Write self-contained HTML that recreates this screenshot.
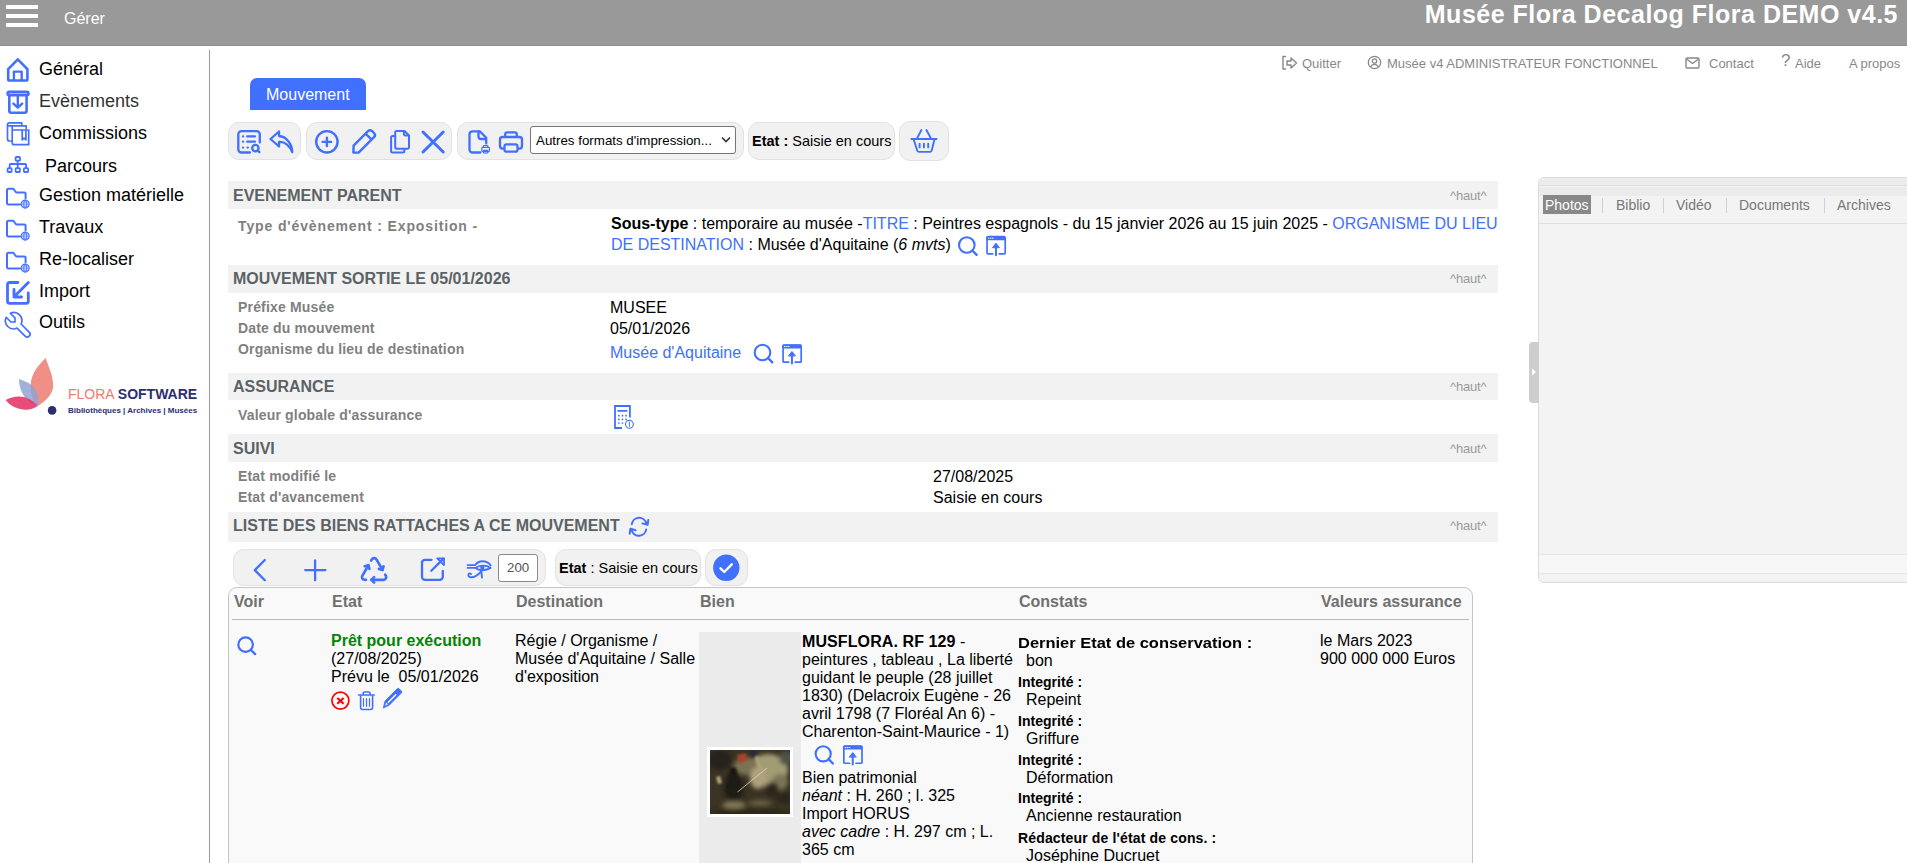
<!DOCTYPE html>
<html><head><meta charset="utf-8">
<style>
*{box-sizing:border-box}
html,body{margin:0;padding:0}
body{width:1907px;height:863px;overflow:hidden;position:relative;background:#fff;font-family:"Liberation Sans",sans-serif;color:#000}
.abs{position:absolute}
.nw{white-space:nowrap}
#hdr{left:0;top:0;width:1907px;height:46px;background:#999;border-bottom:1px solid #8e8e8e}
.hb{position:absolute;left:6px;width:32px;height:4px;background:#fff}
#side{left:209px;top:50px;width:1px;height:813px;background:#999}
.mi{position:absolute;left:39px;font-size:18px;line-height:20px;white-space:nowrap;color:#000}
.ic{position:absolute}
.lk{position:absolute;top:56px;font-size:13px;line-height:16px;color:#888;white-space:nowrap}
.tb{position:absolute;top:122px;height:38px;background:#f1f1f1;border:1px solid #e2e2e2;border-radius:11px}
.sh{position:absolute;left:228px;width:1270px;background:#f2f2f2}
.sh .t{position:absolute;left:5px;font-size:16px;font-weight:bold;color:#5b6266;white-space:nowrap}
.sh .h{position:absolute;right:12px;font-size:12px;color:#9a9a9a;white-space:nowrap}
.lb{position:absolute;left:238px;font-size:13px;font-weight:bold;letter-spacing:0.7px;color:#808080;white-space:nowrap}
.vl{position:absolute;font-size:16px;white-space:nowrap;color:#000}
.blue{color:#4a6cf7}
</style></head><body>
<div id="hdr" class="abs">
  <div class="hb" style="top:5px"></div>
  <div class="hb" style="top:14px"></div>
  <div class="hb" style="top:23px"></div>
  <div class="abs nw" style="left:64px;top:10px;font-size:16px;color:#fff">Gérer</div>
  <div class="abs nw" style="right:9px;top:0px;font-size:25px;font-weight:bold;color:#fff;letter-spacing:0.5px">Musée Flora Decalog Flora DEMO v4.5</div>
</div>
<div id="side" class="abs"></div>

<!-- sidebar icons -->
<svg class="abs" style="left:0;top:0;pointer-events:none" width="210" height="340" viewBox="0 0 210 340" fill="none" stroke="#4470ff" stroke-linecap="round" stroke-linejoin="round">
 <path d="M5.8 69.5 L17.8 58.3 L29.8 69.5" stroke-width="0" />
 <path d="M8.2 79.2 V69.2 L17.8 59.3 L27.4 69.2 V79.2 a1.3 1.3 0 0 1 -1.3 1.3 H9.5 a1.3 1.3 0 0 1 -1.3 -1.3 Z" stroke-width="2.6"/>
 <path d="M13.9 80.3 V71.6 H21.7 V80.3" stroke-width="2.4"/>
 <rect x="7.6" y="91.9" width="20.9" height="3.2" rx="1.6" stroke-width="2.6"/>
 <path d="M9.3 95.5 V110.8 a2 2 0 0 0 2 2 H24.6 a2 2 0 0 0 2 -2 V95.5" stroke-width="2.6"/>
 <path d="M17.8 96 V107.2 M13.4 103.6 L17.8 107.6 L22.2 103.6" stroke-width="2.4"/>
 <g stroke-width="1.7">
  <path d="M11.4 141 H9.5 a2 2 0 0 1 -2 -2 V124.8 a2 2 0 0 1 2 -2 H21.8 V124.5"/>
  <path d="M7.8 125.8 H26.2 V128.5"/>
  <path d="M12.2 126.5 V142.7 a2 2 0 0 0 2 2 H28.7 V130 H12.2"/>
  <path d="M22.2 130.4 V139.9 L24 138.2 L25.9 139.9 V130.4"/>
 </g>
 <g stroke-width="1.8">
  <rect x="15.6" y="157" width="4.4" height="3.7" rx="0.8"/>
  <rect x="7.6" y="168.1" width="4" height="3.9" rx="0.8"/><rect x="15.6" y="168.1" width="4.3" height="3.9" rx="0.8"/><rect x="23.9" y="168.1" width="4.3" height="3.9" rx="0.8"/>
  <path d="M17.7 161.2 V167.5 M9.7 167.5 V164.8 a0.8 0.8 0 0 1 0.8 -0.8 H25.3 a0.8 0.8 0 0 1 0.8 0.8 V167.5"/>
 </g>
<g transform="translate(0 0)"><path d="M20 204.4 H8.5 a1.5 1.5 0 0 1 -1.5 -1.5 V190.3 a1.5 1.5 0 0 1 1.5 -1.5 H13.4 L16.2 192.5 H24.1 a1.5 1.5 0 0 1 1.5 1.5 V198.2" stroke-width="2"/><circle cx="25.2" cy="204.1" r="4" stroke-width="1.1"/><path d="M21.2 204.1 H29.2 M25.2 200.1 C23.2 202 23.2 206.2 25.2 208.1 C27.2 206.2 27.2 202 25.2 200.1 M21.9 202 H28.5 M21.9 206.2 H28.5" stroke-width="0.9"/></g><g transform="translate(0 32)"><path d="M20 204.4 H8.5 a1.5 1.5 0 0 1 -1.5 -1.5 V190.3 a1.5 1.5 0 0 1 1.5 -1.5 H13.4 L16.2 192.5 H24.1 a1.5 1.5 0 0 1 1.5 1.5 V198.2" stroke-width="2"/><circle cx="25.2" cy="204.1" r="4" stroke-width="1.1"/><path d="M21.2 204.1 H29.2 M25.2 200.1 C23.2 202 23.2 206.2 25.2 208.1 C27.2 206.2 27.2 202 25.2 200.1 M21.9 202 H28.5 M21.9 206.2 H28.5" stroke-width="0.9"/></g><g transform="translate(0 64)"><path d="M20 204.4 H8.5 a1.5 1.5 0 0 1 -1.5 -1.5 V190.3 a1.5 1.5 0 0 1 1.5 -1.5 H13.4 L16.2 192.5 H24.1 a1.5 1.5 0 0 1 1.5 1.5 V198.2" stroke-width="2"/><circle cx="25.2" cy="204.1" r="4" stroke-width="1.1"/><path d="M21.2 204.1 H29.2 M25.2 200.1 C23.2 202 23.2 206.2 25.2 208.1 C27.2 206.2 27.2 202 25.2 200.1 M21.9 202 H28.5 M21.9 206.2 H28.5" stroke-width="0.9"/></g>
 <g stroke-width="2.8">
  <path d="M17.9 282.5 H9.5 a2 2 0 0 0 -2 2 V301.3 a2 2 0 0 0 2 2 H26.3 a2 2 0 0 0 2 -2 V292.9"/>
  <path d="M28.3 282.6 L14.2 296.7 M14 289.3 V297 H21.6"/>
 </g>
 <g transform="translate(1.5 308.5) scale(1.35)" stroke-width="1.25"><path d="M7 10h3v-3l-3.5 -3.5a6 6 0 0 1 8 8l6 6a2 2 0 0 1 -3 3l-6 -6a6 6 0 0 1 -8 -8l3.5 3.5"/></g>
</svg>
<div class="mi" style="top:59px">Général</div>
<div class="mi" style="top:91px;color:#333">Evènements</div>
<div class="mi" style="top:123px">Commissions</div>
<div class="mi" style="top:156px;left:45px">Parcours</div>
<div class="mi" style="top:185px">Gestion matérielle</div>
<div class="mi" style="top:217px">Travaux</div>
<div class="mi" style="top:249px">Re-localiser</div>
<div class="mi" style="top:281px">Import</div>
<div class="mi" style="top:312px">Outils</div>
<!-- logo -->
<svg class="ic" style="left:0;top:350px" width="60" height="66" viewBox="0 0 60 66">
 <path d="M45.7 8 C40 14 31 22 30.6 36 C30.5 46 34 52 37.6 56 C48 50 53.5 42 53.2 35.5 C53 24 48 16 45.7 8 Z" fill="#ef8f85"/>
 <path d="M19 29 C19 42 26 52 37.6 56 C40 47 36 38 30 34 C26 31.5 22 30 19 29 Z" fill="#8fa3d3" opacity="0.85"/>
 <path d="M5.6 50 C15 45 28 44 37.6 56 C30 62 14 61 5.6 50 Z" fill="#e6386a" opacity="0.9"/>
 <circle cx="52.1" cy="60.4" r="4.3" fill="#2b2e70"/></svg>
<div class="abs nw" style="left:68px;top:386px;font-size:14px;color:#ef7a6d;letter-spacing:0px">FLORA <b style="color:#2b2e70">SOFTWARE</b></div>
<div class="abs nw" style="left:68px;top:406px;font-size:8px;font-weight:bold;color:#2b2e70">Bibliothèques | Archives | Musées</div>



<!-- top links -->
<svg class="ic" style="left:1281px;top:55px" width="17" height="16" viewBox="0 0 17 16" fill="none" stroke="#888" stroke-width="1.4" stroke-linejoin="round" stroke-linecap="round">
 <path d="M4.5 1.5 H2 V14 H4.5"/><path d="M6 6 H10 V3 L15.5 8 L10 13 V10 H6 Z"/></svg>
<div class="lk" style="left:1302px">Quitter</div>
<svg class="ic" style="left:1367px;top:55px" width="15" height="15" viewBox="0 0 15 15" fill="none" stroke="#888" stroke-width="1.3">
 <circle cx="7.5" cy="7.5" r="6.2"/><circle cx="7.5" cy="6" r="2.2"/><path d="M3.6 12 C4.5 10 6 9.3 7.5 9.3 C9 9.3 10.5 10 11.4 12"/></svg>
<div class="lk" style="left:1387px">Musée v4 ADMINISTRATEUR FONCTIONNEL</div>
<svg class="ic" style="left:1685px;top:57px" width="15" height="12" viewBox="0 0 15 12" fill="none" stroke="#888" stroke-width="1.4" stroke-linejoin="round">
 <rect x="1" y="1" width="13" height="10" rx="1"/><path d="M1.5 2 L7.5 6.5 L13.5 2"/></svg>
<div class="lk" style="left:1709px">Contact</div>
<div class="lk" style="left:1781px;font-size:17px;top:53px">?</div>
<div class="lk" style="left:1795px">Aide</div>
<div class="lk" style="left:1849px">A propos</div>
<!-- tab -->
<div class="abs" style="left:250px;top:78px;width:116px;height:32px;background:#4170ff;border-radius:7px 7px 0 0"></div>
<div class="abs nw" style="left:266px;top:86px;font-size:16px;line-height:18px;color:#fff">Mouvement</div>
<!-- toolbar -->
<div class="tb" style="left:228px;width:73px"></div>
<div class="tb" style="left:306px;width:146px"></div>
<div class="tb" style="left:457px;width:287px"></div>
<div class="tb" style="left:748px;width:147px"></div>
<div class="tb" style="left:899px;width:50px;top:121px;height:40px"></div>
<div class="abs" style="left:530px;top:126px;width:206px;height:28px;border:1px solid #767676;border-radius:3px;background:#fff"></div>
<div class="abs nw" style="left:536px;top:133px;font-size:13.333px;line-height:16px;color:#000">Autres formats d'impression...</div>
<svg class="ic" style="left:720px;top:135px" width="12" height="9" viewBox="0 0 12 9" fill="none" stroke="#333" stroke-width="1.6"><path d="M2 2.5 L6 6.5 L10 2.5"/></svg>
<div class="abs nw" style="left:752px;top:133px;font-size:14.5px;line-height:16px;color:#000"><b>Etat :</b> Saisie en cours</div>
<svg class="abs" style="left:0;top:0;pointer-events:none" width="1907" height="863" viewBox="0 0 1907 863" fill="none" stroke="#4170ff" stroke-linecap="round" stroke-linejoin="round">
 <!-- list search -->
 <g stroke-width="2.3">
  <path d="M250 152.5 H241.5 a3.2 3.2 0 0 1 -3.2 -3.2 V134.3 a3.2 3.2 0 0 1 3.2 -3.2 H256.6 a3.2 3.2 0 0 1 3.2 3.2 V142.5"/>
  <path d="M243 136.4 h0.1 M247.2 136.4 H255 M243 141.7 h0.1 M247.2 141.7 H255 M243 147.6 h0.1 M247.6 147.6 h0.2"/>
  <circle cx="255.4" cy="148.1" r="3.2"/><path d="M257.8 150.5 L259.4 152.1"/>
 </g>
 <!-- reply -->
 <path d="M279 131.5 L270.5 139 L279 146.5 V142 C285 141.5 290 146 292.2 152.2 C292.5 144 286 136.5 279 136 Z" stroke-width="2.3"/>
 <!-- circle plus -->
 <circle cx="326.9" cy="141.8" r="10.7" stroke-width="2.4"/>
 <path d="M322.7 141.9 H331.1 M326.9 137.7 V146.1" stroke-width="2.4"/>
 <!-- pencil -->
 <path d="M353.4 152.6 H358.6 L374 137.2 a3 3 0 0 0 0 -4.2 L372.2 131.2 a3 3 0 0 0 -4.2 0 L353.6 145.6 Z M365.6 133.6 L371.6 139.6" stroke-width="2.4"/>
 <!-- copy -->
 <g stroke-width="2">
  <path d="M395.2 136 H392.6 a1.5 1.5 0 0 0 -1.5 1.5 V151 a1.5 1.5 0 0 0 1.5 1.5 H402.8 a1.5 1.5 0 0 0 1.5 -1.5 V149"/>
  <path d="M395.2 132.5 a1.5 1.5 0 0 1 1.5 -1.5 H404.5 L409 135.5 V147.3 a1.5 1.5 0 0 1 -1.5 1.5 H396.7 a1.5 1.5 0 0 1 -1.5 -1.5 Z"/>
  <path d="M404 131.2 V134.2 a1.3 1.3 0 0 0 1.3 1.3 H408.8"/>
 </g>
 <!-- X -->
 <path d="M423 132 L443.2 152 M443.2 132 L423 152" stroke-width="3"/>
 <!-- file print -->
 <g stroke-width="2.3">
  <path d="M480.4 152.5 H472.5 a3 3 0 0 1 -3 -3 V134.3 a3 3 0 0 1 3 -3 H479.8 L486.2 137.8 V143.5"/>
  <path d="M478.5 131.5 V136.5 a2.5 2.5 0 0 0 2.5 2.5 H485.8"/>
 </g>
 <g stroke-width="1.2">
  <rect x="481.9" y="147.4" width="7.5" height="4.2" rx="0.8"/><rect x="483.5" y="145.5" width="4.3" height="2" rx="0.5"/><rect x="483.5" y="150.4" width="4.3" height="2.6" rx="0.5"/>
 </g>
 <!-- printer -->
 <g stroke-width="2.3">
  <path d="M504 148.6 H502.5 a2.5 2.5 0 0 1 -2.5 -2.5 V139.5 a2.5 2.5 0 0 1 2.5 -2.5 H519.5 a2.5 2.5 0 0 1 2.5 2.5 V146.1 a2.5 2.5 0 0 1 -2.5 2.5 H518"/>
  <path d="M505.2 136.8 V134.3 a2 2 0 0 1 2 -2 H514.8 a2 2 0 0 1 2 2 V136.8"/>
  <rect x="504.5" y="144.3" width="13" height="7.4" rx="2"/>
 </g>
 <!-- basket -->
 <g stroke-width="1.9">
  <path d="M911.4 139 H936.6 M913.8 139.8 L917.2 150.5 a2 2 0 0 0 1.9 1.4 H929.8 a2 2 0 0 0 1.9 -1.4 L934.4 139.8"/>
  <path d="M917.4 137.8 L921.4 130 M930.6 137.8 L926.4 130"/>
  <path d="M919.6 143.6 V147.4 M923.9 143.6 V147.4 M928.2 143.6 V147.4"/>
 </g>
</svg>

<!--CONTENT-->
<div class="abs" style="left:228px;top:181px;width:1270px;height:28px;background:#f2f2f2"></div>
<div class="abs nw" style="left:233px;top:188px;font-size:16px;line-height:16px;font-weight:bold;color:#5b6266;">EVENEMENT PARENT</div>
<div class="abs nw" style="left:1450px;top:189px;font-size:13px;line-height:13px;font-weight:normal;color:#9a9a9a;letter-spacing:-0.2px">^haut^</div>
<div class="abs nw" style="left:238px;top:219px;font-size:14px;line-height:14px;font-weight:bold;color:#808080;letter-spacing:0.87px">Type d'évènement : Exposition -</div>
<div class="abs nw" style="left:611px;top:216px;font-size:16px;line-height:16px;font-weight:normal;color:#000;"><b>Sous-type</b> : temporaire au musée -<span style="color:#4170ff">TITRE</span> : Peintres espagnols - du 15 janvier 2026 au 15 juin 2025 - <span style="color:#4170ff">ORGANISME DU LIEU</span></div>
<div class="abs nw" style="left:611px;top:237px;font-size:16px;line-height:16px;font-weight:normal;color:#000;"><span style="color:#4170ff">DE DESTINATION</span> : Musée d'Aquitaine (<i>6 mvts</i>)</div>
<div class="abs" style="left:228px;top:265px;width:1270px;height:28px;background:#f2f2f2"></div>
<div class="abs nw" style="left:233px;top:271px;font-size:16px;line-height:16px;font-weight:bold;color:#5b6266;">MOUVEMENT SORTIE LE 05/01/2026</div>
<div class="abs nw" style="left:1450px;top:272px;font-size:13px;line-height:13px;font-weight:normal;color:#9a9a9a;letter-spacing:-0.2px">^haut^</div>
<div class="abs nw" style="left:238px;top:300px;font-size:14px;line-height:14px;font-weight:bold;color:#808080;letter-spacing:0.17px">Préfixe Musée</div>
<div class="abs nw" style="left:238px;top:321px;font-size:14px;line-height:14px;font-weight:bold;color:#808080;letter-spacing:0.17px">Date du mouvement</div>
<div class="abs nw" style="left:238px;top:342px;font-size:14px;line-height:14px;font-weight:bold;color:#808080;letter-spacing:0.17px">Organisme du lieu de destination</div>
<div class="abs nw" style="left:610px;top:300px;font-size:16px;line-height:16px;font-weight:normal;color:#000;">MUSEE</div>
<div class="abs nw" style="left:610px;top:321px;font-size:16px;line-height:16px;font-weight:normal;color:#000;">05/01/2026</div>
<div class="abs nw" style="left:610px;top:345px;font-size:16px;line-height:16px;font-weight:normal;color:#4170ff;">Musée d'Aquitaine</div>
<div class="abs" style="left:228px;top:373px;width:1270px;height:27px;background:#f2f2f2"></div>
<div class="abs nw" style="left:233px;top:379px;font-size:16px;line-height:16px;font-weight:bold;color:#5b6266;">ASSURANCE</div>
<div class="abs nw" style="left:1450px;top:380px;font-size:13px;line-height:13px;font-weight:normal;color:#9a9a9a;letter-spacing:-0.2px">^haut^</div>
<div class="abs nw" style="left:238px;top:408px;font-size:14px;line-height:14px;font-weight:bold;color:#808080;letter-spacing:0.17px">Valeur globale d'assurance</div>
<div class="abs" style="left:228px;top:434px;width:1270px;height:28px;background:#f2f2f2"></div>
<div class="abs nw" style="left:233px;top:441px;font-size:16px;line-height:16px;font-weight:bold;color:#5b6266;">SUIVI</div>
<div class="abs nw" style="left:1450px;top:442px;font-size:13px;line-height:13px;font-weight:normal;color:#9a9a9a;letter-spacing:-0.2px">^haut^</div>
<div class="abs nw" style="left:238px;top:469px;font-size:14px;line-height:14px;font-weight:bold;color:#808080;letter-spacing:0.17px">Etat modifié le</div>
<div class="abs nw" style="left:238px;top:490px;font-size:14px;line-height:14px;font-weight:bold;color:#808080;letter-spacing:0.17px">Etat d'avancement</div>
<div class="abs nw" style="left:933px;top:469px;font-size:16px;line-height:16px;font-weight:normal;color:#000;">27/08/2025</div>
<div class="abs nw" style="left:933px;top:490px;font-size:16px;line-height:16px;font-weight:normal;color:#000;">Saisie en cours</div>
<div class="abs" style="left:228px;top:512px;width:1270px;height:30px;background:#f2f2f2"></div>
<div class="abs nw" style="left:233px;top:518px;font-size:16px;line-height:16px;font-weight:bold;color:#5b6266;">LISTE DES BIENS RATTACHES A CE MOUVEMENT</div>
<div class="abs nw" style="left:1450px;top:519px;font-size:13px;line-height:13px;font-weight:normal;color:#9a9a9a;letter-spacing:-0.2px">^haut^</div>
<div class="tb" style="left:233px;top:549px;width:313px;height:37px"></div>
<div class="tb" style="left:555px;top:549px;width:146px;height:37px"></div>
<div class="tb" style="left:705px;top:549px;width:43px;height:37px"></div>
<div class="abs" style="left:498px;top:554px;width:40px;height:28px;border:1px solid #8a8a8a;border-radius:3px;background:#fff"></div>
<div class="abs nw" style="left:507px;top:561px;font-size:13.333px;line-height:13.333px;font-weight:normal;color:#555;">200</div>
<div class="abs nw" style="left:559px;top:561px;font-size:14.5px;line-height:14.5px;font-weight:normal;color:#000;"><b>Etat</b> : Saisie en cours</div>
<div class="abs" style="left:228px;top:587px;width:1245px;height:300px;background:#f9f9f9;border:1px solid #c4c4c4;border-radius:9px"></div>
<div class="abs" style="left:232px;top:619px;width:1237px;height:1px;background:#b9b9b9"></div>
<div class="abs nw" style="left:234px;top:594px;font-size:16px;line-height:16px;font-weight:bold;color:#707070;">Voir</div>
<div class="abs nw" style="left:332px;top:594px;font-size:16px;line-height:16px;font-weight:bold;color:#707070;">Etat</div>
<div class="abs nw" style="left:516px;top:594px;font-size:16px;line-height:16px;font-weight:bold;color:#707070;">Destination</div>
<div class="abs nw" style="left:700px;top:594px;font-size:16px;line-height:16px;font-weight:bold;color:#707070;">Bien</div>
<div class="abs nw" style="left:1019px;top:594px;font-size:16px;line-height:16px;font-weight:bold;color:#707070;">Constats</div>
<div class="abs nw" style="left:1321px;top:594px;font-size:16px;line-height:16px;font-weight:bold;color:#707070;">Valeurs assurance</div>
<div class="abs nw" style="left:331px;top:633px;font-size:16px;line-height:16px;font-weight:bold;color:#058305;">Prêt pour exécution</div>
<div class="abs nw" style="left:331px;top:651px;font-size:16px;line-height:16px;font-weight:normal;color:#000;">(27/08/2025)</div>
<div class="abs nw" style="left:331px;top:669px;font-size:16px;line-height:16px;font-weight:normal;color:#000;">Prévu le&nbsp; 05/01/2026</div>
<div class="abs nw" style="left:515px;top:633px;font-size:16px;line-height:16px;font-weight:normal;color:#000;">Régie / Organisme /</div>
<div class="abs nw" style="left:515px;top:651px;font-size:16px;line-height:16px;font-weight:normal;color:#000;">Musée d'Aquitaine / Salle</div>
<div class="abs nw" style="left:515px;top:669px;font-size:16px;line-height:16px;font-weight:normal;color:#000;">d'exposition</div>
<div class="abs" style="left:699px;top:632px;width:102px;height:240px;background:#ebebeb"></div>
<div class="abs nw" style="left:802px;top:634px;font-size:16px;line-height:16px;font-weight:normal;color:#000;"><b style="letter-spacing:0.1px">MUSFLORA. RF 129</b> -</div>
<div class="abs nw" style="left:802px;top:652px;font-size:16px;line-height:16px;font-weight:normal;color:#000;">peintures , tableau , La liberté</div>
<div class="abs nw" style="left:802px;top:670px;font-size:16px;line-height:16px;font-weight:normal;color:#000;">guidant le peuple (28 juillet</div>
<div class="abs nw" style="left:802px;top:688px;font-size:16px;line-height:16px;font-weight:normal;color:#000;">1830) (Delacroix Eugène - 26</div>
<div class="abs nw" style="left:802px;top:706px;font-size:16px;line-height:16px;font-weight:normal;color:#000;">avril 1798 (7 Floréal An 6) -</div>
<div class="abs nw" style="left:802px;top:724px;font-size:16px;line-height:16px;font-weight:normal;color:#000;">Charenton-Saint-Maurice - 1)</div>
<div class="abs nw" style="left:802px;top:770px;font-size:16px;line-height:16px;font-weight:normal;color:#000;">Bien patrimonial</div>
<div class="abs nw" style="left:802px;top:788px;font-size:16px;line-height:16px;font-weight:normal;color:#000;"><i>néant</i> : H. 260 ; l. 325</div>
<div class="abs nw" style="left:802px;top:806px;font-size:16px;line-height:16px;font-weight:normal;color:#000;">Import HORUS</div>
<div class="abs nw" style="left:802px;top:824px;font-size:16px;line-height:16px;font-weight:normal;color:#000;"><i>avec cadre</i> : H. 297 cm ; L.</div>
<div class="abs nw" style="left:802px;top:842px;font-size:16px;line-height:16px;font-weight:normal;color:#000;">365 cm</div>
<div class="abs nw" style="left:1018px;top:636px;font-size:14px;line-height:14px;font-weight:bold;color:#000;transform:scaleX(1.176);transform-origin:0 0">Dernier Etat de conservation :</div>
<div class="abs nw" style="left:1026px;top:653px;font-size:16px;line-height:16px;font-weight:normal;color:#000;">bon</div>
<div class="abs nw" style="left:1018px;top:675px;font-size:14px;line-height:14px;font-weight:bold;color:#000;letter-spacing:0.03px">Integrité :</div>
<div class="abs nw" style="left:1026px;top:692px;font-size:16px;line-height:16px;font-weight:normal;color:#000;">Repeint</div>
<div class="abs nw" style="left:1018px;top:714px;font-size:14px;line-height:14px;font-weight:bold;color:#000;letter-spacing:0.03px">Integrité :</div>
<div class="abs nw" style="left:1026px;top:731px;font-size:16px;line-height:16px;font-weight:normal;color:#000;">Griffure</div>
<div class="abs nw" style="left:1018px;top:753px;font-size:14px;line-height:14px;font-weight:bold;color:#000;letter-spacing:0.03px">Integrité :</div>
<div class="abs nw" style="left:1026px;top:770px;font-size:16px;line-height:16px;font-weight:normal;color:#000;">Déformation</div>
<div class="abs nw" style="left:1018px;top:791px;font-size:14px;line-height:14px;font-weight:bold;color:#000;letter-spacing:0.03px">Integrité :</div>
<div class="abs nw" style="left:1026px;top:808px;font-size:16px;line-height:16px;font-weight:normal;color:#000;">Ancienne restauration</div>
<div class="abs nw" style="left:1018px;top:831px;font-size:14px;line-height:14px;font-weight:bold;color:#000;letter-spacing:0.15px">Rédacteur de l'état de cons. :</div>
<div class="abs nw" style="left:1026px;top:848px;font-size:16px;line-height:16px;font-weight:normal;color:#000;">Joséphine Ducruet</div>
<div class="abs nw" style="left:1320px;top:633px;font-size:16px;line-height:16px;font-weight:normal;color:#000;">le Mars 2023</div>
<div class="abs nw" style="left:1320px;top:651px;font-size:16px;line-height:16px;font-weight:normal;color:#000;">900 000 000 Euros</div>
<div class="abs" style="left:1538px;top:177px;width:380px;height:406px;background:#f3f3f3;border:1px solid #dcdcdc;border-radius:6px;overflow:hidden">
 <div class="abs" style="left:0;top:0;width:100%;height:8px;background:#ececec;border-bottom:1px solid #dedede"></div>
 <div class="abs" style="left:0;top:9px;width:100%;height:9px;background:#ebebeb"></div>
 <div class="abs" style="left:0;top:45px;width:100%;height:1px;background:#dedede"></div>
 <div class="abs" style="left:0;top:376px;width:100%;height:1px;background:#e4e4e4"></div>
 <div class="abs" style="left:0;top:377px;width:100%;height:19px;background:#f7f7f7;border-bottom:1px solid #e4e4e4"></div>
</div>
<div class="abs" style="left:1543px;top:195px;width:48px;height:19px;background:#888"></div>
<div class="abs nw" style="left:1545px;top:198px;font-size:14px;line-height:14px;font-weight:normal;color:#fff;">Photos</div>
<div class="abs nw" style="left:1616px;top:198px;font-size:14px;line-height:14px;font-weight:normal;color:#777;">Biblio</div>
<div class="abs nw" style="left:1676px;top:198px;font-size:14px;line-height:14px;font-weight:normal;color:#777;">Vidéo</div>
<div class="abs nw" style="left:1739px;top:198px;font-size:14px;line-height:14px;font-weight:normal;color:#777;">Documents</div>
<div class="abs nw" style="left:1837px;top:198px;font-size:14px;line-height:14px;font-weight:normal;color:#777;">Archives</div>
<div class="abs" style="left:1602px;top:198px;width:1px;height:15px;background:#d0d0d0"></div>
<div class="abs" style="left:1663px;top:198px;width:1px;height:15px;background:#d0d0d0"></div>
<div class="abs" style="left:1726px;top:198px;width:1px;height:15px;background:#d0d0d0"></div>
<div class="abs" style="left:1824px;top:198px;width:1px;height:15px;background:#d0d0d0"></div>
<div class="abs" style="left:1529px;top:342px;width:10px;height:61px;background:#cdcdcd;border-radius:4px 0 0 4px"></div>
<svg class="abs" style="left:1531px;top:368px" width="6" height="8" viewBox="0 0 6 8"><path d="M1 0.5 L5 4 L1 7.5 Z" fill="#fff"/></svg>
<svg class="abs" style="left:0;top:0;pointer-events:none" width="1907" height="863" viewBox="0 0 1907 863" fill="none" stroke="#4170ff" stroke-linecap="round" stroke-linejoin="round"><circle cx="966.8" cy="245" r="7.8" stroke-width="2.1"/><path d="M972.32 250.52 L976.62 254.82" stroke-width="2.31"/><path d="M992.7 253.85 H988.0500000000001 a1 1 0 0 1 -1 -1 V238.2 a1.5 1.5 0 0 1 1.5 -1.5 H1003.7 a1.5 1.5 0 0 1 1.5 1.5 V252.85 a1 1 0 0 1 -1 1 H999.2" stroke-width="1.7"/><rect x="986.2" y="236.2" width="19.5" height="4" rx="1.2" fill="#4170ff" stroke="none"/><path d="M988.4000000000001 238.2 h0.6 M990.4000000000001 238.2 h0.6 M992.4000000000001 238.2 h0.6" stroke="#fff" stroke-width="1"/><path d="M995.95 255.2 V244.7" stroke-width="2"/><path d="M992.6500000000001 247.39999999999998 L995.95 243.2 L999.25 247.39999999999998 Z" fill="#4170ff" stroke-width="1"/><circle cx="762.5" cy="352.5" r="7.8" stroke-width="2.1"/><path d="M768.02 358.02 L772.32 362.32" stroke-width="2.31"/><path d="M788.7 362.15 H784.0500000000001 a1 1 0 0 1 -1 -1 V346.5 a1.5 1.5 0 0 1 1.5 -1.5 H799.7 a1.5 1.5 0 0 1 1.5 1.5 V361.15 a1 1 0 0 1 -1 1 H795.2" stroke-width="1.7"/><rect x="782.2" y="344.5" width="19.5" height="4" rx="1.2" fill="#4170ff" stroke="none"/><path d="M784.4000000000001 346.5 h0.6 M786.4000000000001 346.5 h0.6 M788.4000000000001 346.5 h0.6" stroke="#fff" stroke-width="1"/><path d="M791.95 363.5 V353.0" stroke-width="2"/><path d="M788.6500000000001 355.7 L791.95 351.5 L795.25 355.7 Z" fill="#4170ff" stroke-width="1"/><path d="M622 428 H615 V406 H629.9 V417.5" stroke-width="1.8" stroke-linecap="butt" stroke-linejoin="miter"/><path d="M618.2 410.9 H626.6" stroke-width="1.9"/><g stroke-width="1.7"><path d="M618.8 415.7 h0.1"/><path d="M618.8 419.4 h0.1"/><path d="M622.4 415.7 h0.1"/><path d="M622.4 419.4 h0.1"/><path d="M626 415.7 h0.1"/><path d="M626 419.4 h0.1"/><path d="M618.8 423 h0.1 M622.4 423 h0.1"/></g><circle cx="629.4" cy="424.3" r="3.9" stroke-width="1.1" fill="#fff"/><path d="M629.4 422.2 V426.3" stroke-width="1"/><g stroke-width="2"><path d="M631.8 524.2 A7.4 7.4 0 0 1 646.3 523.4"/><path d="M642.4 523.4 L647.6 524.9 L648.3 519.9"/><path d="M646.2 529.4 A7.4 7.4 0 0 1 631.7 530.2"/><path d="M635.6 530.2 L630.4 528.7 L629.7 533.7"/></g><g stroke-width="2.3"><path d="M264.8 560 L254.8 570.1 L264.8 580.2"/><path d="M305.2 570.1 H325.4 M315.1 560.5 V580.2"/></g><g transform="translate(357.8 554) scale(1.36)" stroke-width="1.95"><path d="M12 17l-2 2l2 2"/><path d="M10 19h9a2 2 0 0 0 1.75 -2.75l-.55 -1"/><path d="M8.536 11l-.732 -2.732l-2.732 .732"/><path d="M7.804 8.268l-4.5 7.794a2 2 0 0 0 1.506 2.89l1.141 .024"/><path d="M15.464 11l2.732 .732l.732 -2.732"/><path d="M18.196 11.732l-4.5 -7.794a2 2 0 0 0 -3.256 -.14l-.591 .976"/></g><g stroke-width="2.3"><path d="M431.5 559.8 H425 a3 3 0 0 0 -3 3 V576.8 a3 3 0 0 0 3 3 H439.8 a3 3 0 0 0 3 -3 V571"/><path d="M431.3 570.8 L443.5 558.6"/><path d="M437.3 558.4 H444 V565.1 Z" stroke-width="1.8"/></g><g stroke-width="1.9"><path d="M467.6 565.1 H475 C477 562.5 479.5 561.2 482.3 561.2 C486 561.2 489 562.8 490.6 565.4"/><path d="M467.6 567.9 H475.5"/><path d="M475.5 567.9 C479 565.2 486 564.6 490.6 567.9 C486 570.8 479 571.2 475.5 567.9 Z"/><circle cx="482.3" cy="567.8" r="1.2" fill="#4170ff"/><path d="M481.3 571 L482 577.6"/><path d="M481 571.6 C478.5 574.5 475 577.3 471.2 577.3 C469.2 577.3 468.2 576 468.4 574.6 C468.6 573.3 470.2 572.9 471 574.1"/></g><circle cx="726.3" cy="567.8" r="13.2" fill="#4170ff" stroke="none"/><path d="M720.5 568.3 L724.3 572 L731.8 564.3" stroke="#fff" stroke-width="2.4"/><circle cx="245.6" cy="644.6" r="7.3" stroke-width="2.2"/><path d="M250.76 649.76 L255.06 654.06" stroke-width="2.42"/><circle cx="340.4" cy="700.6" r="8.5" stroke="#ff0000" stroke-width="1.7"/><path d="M337.3 698 L343.6 703.7 M343.6 698 L337.3 703.7" stroke="#ff0000" stroke-width="2.2" stroke-linecap="butt"/><g stroke-width="1.6"><path d="M358.6 695 H374.2"/><path d="M363.2 694.5 V693.5 a1.5 1.5 0 0 1 1.5 -1.5 H368.6 a1.5 1.5 0 0 1 1.5 1.5 V694.5"/><path d="M360.6 696 V707.5 a2 2 0 0 0 2 2 H370.6 a2 2 0 0 0 2 -2 V696"/><path d="M363.5 698.6 V706.2 M366.5 698.6 V706.2 M369.5 698.6 V706.2" stroke-width="1.2"/></g><path d="M383.3 707.8 L385 701 L397.2 688.8 a1.4 1.4 0 0 1 2 0 L401.4 691 a1.4 1.4 0 0 1 0 2 L389.2 705.2 Z" fill="#4170ff" stroke="#4170ff" stroke-width="0.8"/><path d="M388.3 702.3 L395.8 694.8" stroke="#fff" stroke-width="1.3"/><path d="M385.2 705.8 L386.2 702.6 L387.8 704.3 Z" fill="#fff" stroke="none"/><circle cx="823.2" cy="753.8" r="7.6" stroke-width="2.1"/><path d="M828.57 759.17 L832.87 763.47" stroke-width="2.31"/><path d="M849.5 763.25 H844.85 a1 1 0 0 1 -1 -1 V747.6 a1.5 1.5 0 0 1 1.5 -1.5 H860.5 a1.5 1.5 0 0 1 1.5 1.5 V762.25 a1 1 0 0 1 -1 1 H856.0" stroke-width="1.7"/><rect x="843" y="745.6" width="19.5" height="4" rx="1.2" fill="#4170ff" stroke="none"/><path d="M845.2 747.6 h0.6 M847.2 747.6 h0.6 M849.2 747.6 h0.6" stroke="#fff" stroke-width="1"/><path d="M852.75 764.6 V754.1" stroke-width="2"/><path d="M849.45 756.8000000000001 L852.75 752.6 L856.05 756.8000000000001 Z" fill="#4170ff" stroke-width="1"/></svg>
<div class="abs" style="left:707px;top:747px;width:86px;height:70px;background:#fff"></div>
<svg class="abs" style="left:710px;top:750px" width="80" height="64" viewBox="0 0 80 64">
 <defs><filter id="bl" x="-20%" y="-20%" width="140%" height="140%"><feGaussianBlur stdDeviation="2"/></filter>
 <filter id="bl2" x="-30%" y="-30%" width="160%" height="160%"><feGaussianBlur stdDeviation="0.9"/></filter></defs>
 <rect width="80" height="64" fill="#3a3323"/>
 <g filter="url(#bl)">
  <ellipse cx="58" cy="20" rx="20" ry="16" fill="#a29c74"/>
  <ellipse cx="36" cy="16" rx="12" ry="9" fill="#7a7352"/>
  <ellipse cx="10" cy="10" rx="12" ry="10" fill="#25241a"/>
  <ellipse cx="76" cy="8" rx="7" ry="7" fill="#50524a"/>
  <ellipse cx="48" cy="28" rx="8" ry="11" fill="#ada27c"/>
  <ellipse cx="70" cy="32" rx="8" ry="8" fill="#7b7456"/>
  <ellipse cx="24" cy="38" rx="10" ry="14" fill="#221d14"/>
  <ellipse cx="62" cy="40" rx="7" ry="8" fill="#2d271c"/>
  <ellipse cx="74" cy="48" rx="8" ry="6" fill="#2a251a"/>
  <ellipse cx="24" cy="55" rx="12" ry="3.5" fill="#857a5a"/>
  <ellipse cx="50" cy="53" rx="12" ry="3" fill="#6a5f45"/>
  <ellipse cx="40" cy="63" rx="42" ry="4" fill="#2a2519"/>
 </g>
 <g filter="url(#bl2)">
  <path d="M27 5 L36 3 L37 11 L29 13 Z" fill="#a8432f"/>
  <path d="M40 0 L46 0 L47 6 L42 7 Z" fill="#262a3a"/>
  <path d="M45 7 L48 6 L52 19 L49 21 Z" fill="#b0a27c"/>
  <path d="M20 18 L26 18 L27 24 L20 24 Z" fill="#1a170f"/>
  <path d="M18 24 L28 24 L29 42 L19 44 Z" fill="#1e1a12"/>
  <path d="M6 27 L10 26 L12 33 L8 34 Z" fill="#b2a584"/>
 </g>
 <path d="M27.5 42 L57 18" stroke="#dcd8cc" stroke-width="0.8"/>
</svg>
<!--/CONTENT-->
</body></html>
